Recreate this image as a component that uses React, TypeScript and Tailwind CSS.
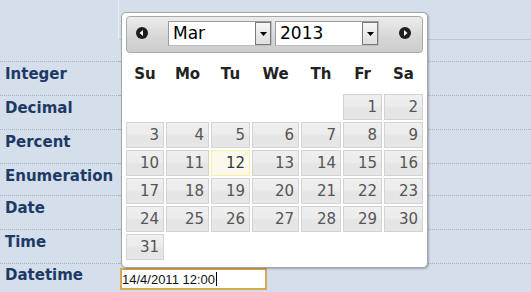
import React from "react";

const labels: { text: string; h: string }[] = [
  { text: "Integer", h: "h-[34px]" },
  { text: "Decimal", h: "h-[34px]" },
  { text: "Percent", h: "h-[34px]" },
  { text: "Enumeration", h: "h-[32px]" },
  { text: "Date", h: "h-[34px]" },
  { text: "Time", h: "h-[34px]" },
];

const days: (number | null)[] = [
  null, null, null, null, null, 1, 2,
  3, 4, 5, 6, 7, 8, 9,
  10, 11, 12, 13, 14, 15, 16,
  17, 18, 19, 20, 21, 22, 23,
  24, 25, 26, 27, 28, 29, 30,
  31,
];

const heads = ["Su", "Mo", "Tu", "We", "Th", "Fr", "Sa"];

function Circle({ dir }: { dir: "prev" | "next" }) {
  return (
    <svg width="12" height="12" viewBox="0 0 12 12" className="shrink-0">
      <circle cx="6" cy="6" r="6" fill="#1e1e1e" />
      {dir === "prev" ? (
        <polygon points="3.5,6 7,3 7,9" fill="#ffffff" />
      ) : (
        <polygon points="8.5,6 5,3 5,9" fill="#ffffff" />
      )}
    </svg>
  );
}

function Select({ value }: { value: string }) {
  return (
    <div className="flex h-[25px] w-[104px] shrink-0 items-stretch border border-[#bdbdbd] border-t-[#9c9c9c] border-l-[#9c9c9c] bg-white">
      <div className="flex flex-1 items-center pl-[4px] text-[17px] leading-none text-black">
        {value}
      </div>
      <div className="flex w-[16px] items-center justify-center border border-[#7a7a7a] bg-[linear-gradient(#f7f7f7,#dedede)]">
        <svg width="7" height="4" viewBox="0 0 7 4">
          <polygon points="0,0 7,0 3.5,4" fill="#000" />
        </svg>
      </div>
    </div>
  );
}

export default function App() {
  return (
    <div className="relative h-[292px] w-[531px] overflow-hidden bg-[#d5deeb] font-['DejaVu_Sans',sans-serif]">
      {/* table rows */}
      <div className="flex flex-col">
        <div className="flex h-[40px]">
          <div className="w-[119px] shrink-0 border-r border-[#e7ecf4]" />
          <div className="flex-1 border-b border-[#bcc4cf]" />
        </div>
        <div className="flex h-[22px]">
          <div className="w-[119px] shrink-0 border-b border-dotted border-[#a9b2bf]" />
          <div className="flex-1 border-b border-dotted border-[#a9b2bf]" />
        </div>
        {labels.map((l) => (
          <div key={l.text} className={`flex ${l.h}`}>
            <div className="w-[119px] shrink-0 border-b border-dotted border-[#a9b2bf] pl-[5px] pt-[3px] text-[15px] font-bold leading-[18px] text-[#1d3a66]">
              {l.text}
            </div>
            <div className="flex-1 border-b border-dotted border-[#a9b2bf]" />
          </div>
        ))}
        <div className="flex h-[30px]">
          <div className="w-[119px] shrink-0 pl-[5px] pt-[2px] text-[15px] font-bold leading-[18px] text-[#1d3a66]">
            Datetime
          </div>
          <div className="flex-1 pl-[1px] pt-[4px]">
            <div className="flex h-[22px] w-[147px] items-center border-2 border-[#d9a94f] bg-white font-['Liberation_Sans',sans-serif] text-[13px] leading-none text-[#111]">
              <span>14/4/2011 12:00</span>
              <span className="ml-[1px] h-[14px] w-[1px] bg-black" />
            </div>
          </div>
        </div>
      </div>

      {/* datepicker popup */}
      <div className="absolute left-[121px] top-[12px] w-[307px] rounded-[5px] border border-[#a6a6a6] bg-white pb-[7px] pl-[4px] pr-[4px] pt-[3px] shadow-[1px_1px_2px_rgba(0,0,0,0.25)]">
        <div className="flex h-[37px] items-start rounded-[4px] border border-[#a8a8a8] bg-[linear-gradient(#ececec,#d6d6d6_60%,#cccccc)] pt-[4px]">
          <div className="ml-[9px] mt-[6px]">
            <Circle dir="prev" />
          </div>
          <div className="ml-[20px]">
            <Select value="Mar" />
          </div>
          <div className="ml-[3px]">
            <Select value="2013" />
          </div>
          <div className="ml-[20px] mt-[6px]">
            <Circle dir="next" />
          </div>
        </div>
        <div className="grid h-[41px] grid-cols-[38px_43px_39px_47px_40px_39px_39px] gap-x-[2px] pt-[12px]">
          {heads.map((h) => (
            <div key={h} className="text-center text-[15px] font-bold leading-[18px] text-[#222]">
              {h}
            </div>
          ))}
        </div>
        <div className="grid grid-cols-[38px_43px_39px_47px_40px_39px_39px] auto-rows-[26px] gap-[2px]">
          {days.map((d, i) =>
            d === null ? (
              <div key={i} />
            ) : d === 12 ? (
              <div
                key={i}
                className="flex items-center justify-end border border-[#fcefa1] bg-[#fbf9ee] pr-[4px] text-[15px] leading-none text-[#363636]"
              >
                {d}
              </div>
            ) : (
              <div
                key={i}
                className="flex items-center justify-end border border-[#d3d3d3] bg-[linear-gradient(#efefef,#ececec_45%,#e5e5e5_55%,#e6e6e6)] pr-[4px] text-[15px] leading-none text-[#555555]"
              >
                {d}
              </div>
            )
          )}
        </div>
      </div>
    </div>
  );
}
